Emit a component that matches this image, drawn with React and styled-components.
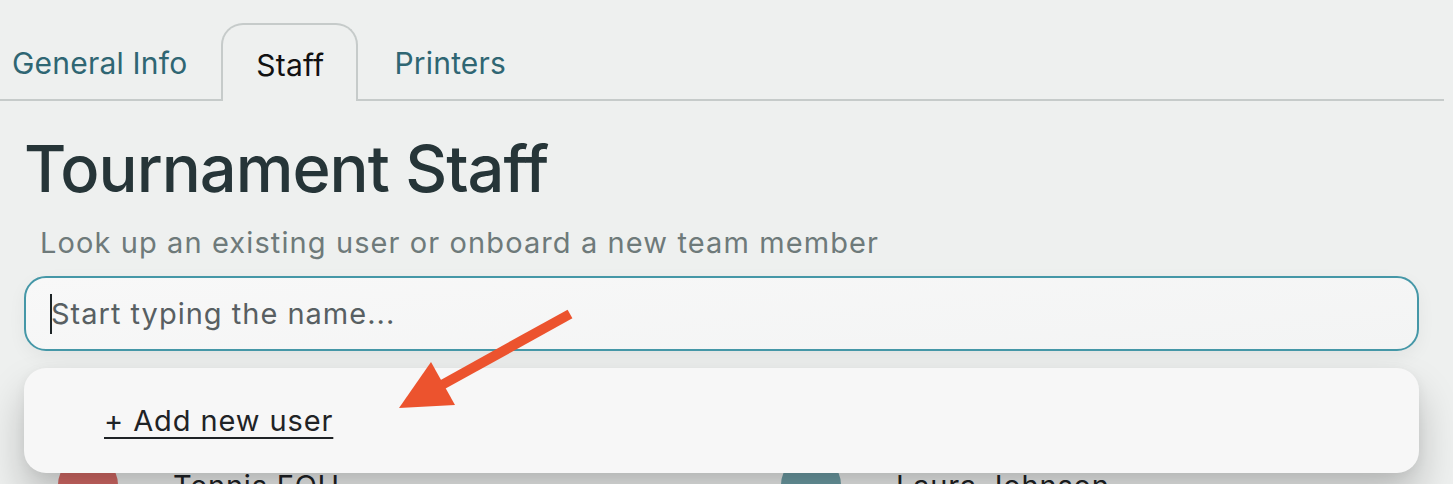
import styled, { createGlobalStyle } from 'styled-components';

/* page globals */
const GlobalStyle = createGlobalStyle`
  html, body {
    margin: 0;
    padding: 0;
    background: #eef0ef;
    font-family: Inter, 'Noto Sans', sans-serif;
    overflow: hidden;
  }
`;

const Page = styled.div`
  position: relative;
  width: 1453px;
  height: 484px;
  overflow: hidden;
  background: #eef0ef;
`;

/* tabs */
const TabBar = styled.nav`
  display: flex;
  align-items: flex-end;
  width: 1444px;
  height: 101px;
  padding-top: 24px;
  box-sizing: border-box;
  border-bottom: 2px solid #c6cbca;
`;

const Tab = styled.div`
  box-sizing: border-box;
  height: 78px;
  display: flex;
  align-items: center;
  padding: ${({ $pad }) => $pad};
  padding-top: 4px;
  font-size: 30px;
  letter-spacing: 0.2px;
  color: ${({ $active }) => ($active ? '#111' : '#2f6673')};
  border: 2px solid ${({ $active }) => ($active ? '#c6cbca' : 'transparent')};
  border-bottom: none;
  border-radius: 22px 22px 0 0;
  margin-bottom: ${({ $active }) => ($active ? '-2px' : '0')};
  background: #eef0ef;
`;

/* content */
const Content = styled.section`
  position: relative;
  padding: 32px 34px 0 24px;
`;

const Title = styled.h1`
  margin: 0;
  font-size: 65px;
  font-weight: 500;
  letter-spacing: -1px;
  line-height: 72px;
  color: #263538;
`;

const Subtitle = styled.p`
  margin: 20px 0 0 16px;
  font-size: 29px;
  letter-spacing: 1.1px;
  line-height: 36px;
  color: #6e7a7a;
`;

const SearchBox = styled.div`
  box-sizing: border-box;
  margin-top: 15px;
  width: 1395px;
  height: 75px;
  display: flex;
  align-items: center;
  padding-left: 24px;
  border: 2px solid #4597a7;
  border-radius: 22px;
  background: linear-gradient(175deg, #f8f8f8, #f3f4f4);
  box-shadow: 0 6px 18px rgba(0, 0, 0, 0.05);
`;

const Caret = styled.span`
  width: 2px;
  height: 40px;
  background: #1d2426;
`;

const SearchInput = styled.input`
  flex: 1;
  border: none;
  outline: none;
  background: transparent;
  font-family: inherit;
  font-size: 29px;
  letter-spacing: 1px;
  color: #222;
  padding: 0;
  margin-left: -1px;
  &::placeholder {
    color: #585f62;
  }
`;

const Dropdown = styled.div`
  position: absolute;
  left: 24px;
  top: 267px;
  width: 1395px;
  height: 105px;
  box-sizing: border-box;
  display: flex;
  align-items: center;
  padding-left: 80px;
  background: #f7f7f7;
  border-radius: 22px;
  box-shadow: 0 24px 40px rgba(0, 0, 0, 0.22), 0 2px 12px rgba(0, 0, 0, 0.05);
  z-index: 2;
`;

const AddLink = styled.a`
  font-size: 29px;
  letter-spacing: 0.9px;
  color: #1f2326;
  text-decoration: underline;
  text-underline-offset: 6px;
  text-decoration-thickness: 2px;
`;

/* staff list behind the dropdown */
const StaffList = styled.div`
  display: grid;
  grid-template-columns: 723px 1fr;
  margin-top: 104px;
`;

const StaffRow = styled.div`
  display: flex;
  align-items: center;
  gap: 55px;
  padding-left: 34px;
  height: 60px;
`;

const Avatar = styled.span`
  width: 60px;
  height: 60px;
  border-radius: 50%;
  background: ${({ $color }) => $color};
`;

const StaffName = styled.span`
  font-size: 29px;
  letter-spacing: 0.8px;
  color: #1f2326;
`;

const ArrowLayer = styled.svg`
  position: absolute;
  left: 0;
  top: 0;
  pointer-events: none;
  z-index: 5;
`;

const staff = [
  { name: 'Tennis FOH', color: '#d66b67' },
  { name: 'Laura Johnson', color: '#6f9fa7' },
];

const App = () => (
  <Page>
    <GlobalStyle />
    <TabBar>
      <Tab $pad='0 32px 0 10px'>General Info</Tab>
      <Tab $active $pad='0 32px 0 33px'>Staff</Tab>
      <Tab $pad='0 36px 0 34px'>Printers</Tab>
    </TabBar>
    <Content>
      <Title>Tournament Staff</Title>
      <Subtitle>Look up an existing user or onboard a new team member</Subtitle>
      <SearchBox>
        <Caret />
        <SearchInput placeholder='Start typing the name...' />
      </SearchBox>
      <Dropdown>
        <AddLink>+ Add new user</AddLink>
      </Dropdown>
      <StaffList>
        {staff.map((s) => (
          <StaffRow key={s.name}>
            <Avatar $color={s.color} />
            <StaffName>{s.name}</StaffName>
          </StaffRow>
        ))}
      </StaffList>
    </Content>
    <ArrowLayer width='1453' height='484' viewBox='0 0 1453 484'>
      <line x1='570' y1='314' x2='440' y2='386' stroke='#ec532e' strokeWidth='10' />
      <polygon points='399,408 431,362 455,405' fill='#ec532e' />
    </ArrowLayer>
  </Page>
);

export default App;
